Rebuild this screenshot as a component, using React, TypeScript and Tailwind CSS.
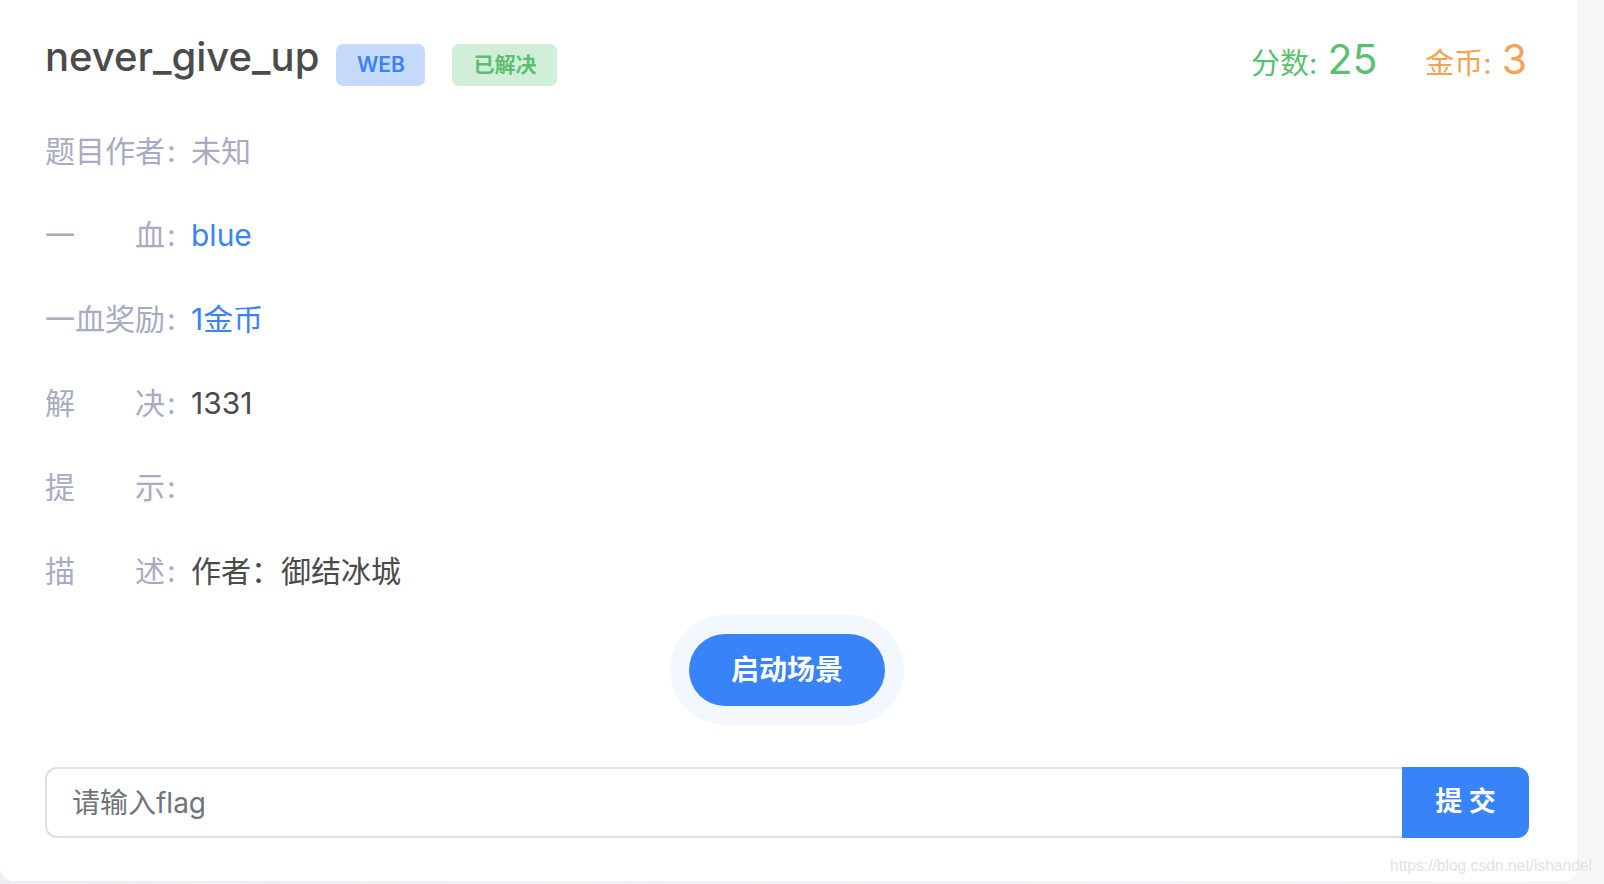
const font = "font-['Inter','Noto_Sans_CJK_SC',sans-serif]";

type Row = { label: string; value?: string; tone?: "muted" | "blue" | "dark" };

const rows: Row[] = [
  { label: "题目作者", value: "未知", tone: "muted" },
  { label: "一血", value: "blue", tone: "blue" },
  { label: "一血奖励", value: "1金币", tone: "blue" },
  { label: "解决", value: "1331", tone: "dark" },
  { label: "提示" },
  { label: "描述", value: "作者：御结冰城", tone: "dark" },
];

const toneClass = {
  muted: "text-[#a8abc3]",
  blue: "text-[#3b82f6]",
  dark: "text-[#4a4a4a]",
};

function InfoRow({ row }: { row: Row }) {
  return (
    <div className="flex h-[84px] items-center text-[30px] leading-none">
      <span className="w-[120px] text-justify text-[#a8abc3] [text-align-last:justify]">
        {row.label}
      </span>
      <span className="w-[26px] pl-[2px] text-[#a8abc3]">:</span>
      {row.value && (
        <span className={toneClass[row.tone ?? "dark"]}>{row.value}</span>
      )}
    </div>
  );
}

export default function App() {
  return (
    <div
      className={`relative flex h-[884px] w-[1604px] overflow-hidden bg-gradient-to-r from-[#eceef1] to-[#f6f7f9] ${font}`}
    >
      <div className="flex h-[881px] w-[1577px] flex-col rounded-b-[14px] bg-white pt-[37px] pr-[48px] pl-[45px]">
        {/* header */}
        <div className="flex items-start justify-between">
          <div className="flex items-start">
            <h1 className="text-[40px] leading-[40px] font-medium text-[#4b4b4b]">
              never_give_up
            </h1>
            <span className="mt-[7px] ml-[17px] flex h-[42px] w-[89px] items-center justify-center rounded-[7px] bg-[#c5dafa] text-[21px] font-semibold text-[#3b82f6]">
              WEB
            </span>
            <span className="mt-[7px] ml-[27px] flex h-[42px] w-[105px] items-center justify-center rounded-[7px] bg-[#d1eed9] text-[21px] font-semibold text-[#5bbf6f]">
              已解决
            </span>
          </div>
          <div className="mt-[2px] flex items-baseline pr-[2px]">
            <span className="text-[29px] text-[#5bbf6f]">分数:</span>
            <span className="ml-[10px] text-[41px] leading-[40px] text-[#5bbf6f]">25</span>
            <span className="ml-[48px] text-[29px] text-[#f5a253]">金币:</span>
            <span className="ml-[10px] text-[41px] leading-[40px] text-[#f5a253]">3</span>
          </div>
        </div>

        {/* details */}
        <div className="mt-[23px] flex flex-col">
          {rows.map((row) => (
            <InfoRow key={row.label} row={row} />
          ))}
        </div>

        {/* start */}
        <div className="mt-[2px] flex justify-center">
          <div className="rounded-full bg-[#f3f7fe] p-[19px]">
            <button className="h-[72px] w-[196px] rounded-full bg-[#3883f7] text-[28px] font-bold text-white">
              启动场景
            </button>
          </div>
        </div>

        {/* flag */}
        <div className="mt-[42px] flex h-[71px]">
          <input
            placeholder="请输入flag"
            className="min-w-0 flex-1 rounded-l-[12px] border-2 border-r-0 border-[#dedfe3] pl-[25px] text-[28px] text-[#4a4a4a] outline-none placeholder:text-[#6f747c]"
          />
          <button className="w-[127px] rounded-r-[12px] bg-[#3883f7] text-[27px] font-bold text-white">
            提 交
          </button>
        </div>
      </div>

      <span className="absolute top-[856px] left-[1390px] font-['Liberation_Sans',sans-serif] text-[15.6px] leading-[20px] text-[#e2e2e4]">
        https://blog.csdn.net/lshandel
      </span>
    </div>
  );
}
